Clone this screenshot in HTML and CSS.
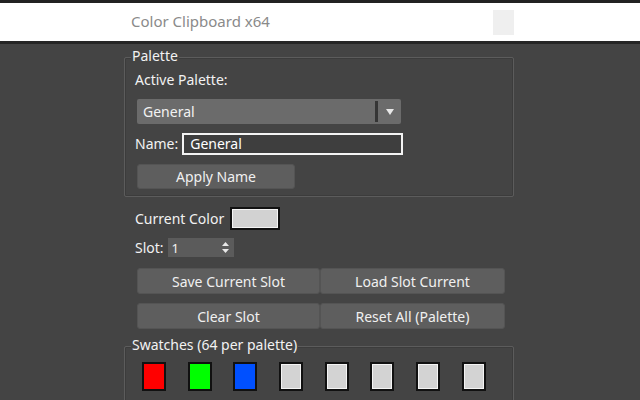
FILE: index.html
```html
<!DOCTYPE html>
<html lang="en">
<head>
  <meta charset="UTF-8">
  <title>Color Clipboard x64</title>
  <link rel="stylesheet" href="styles.css">
</head>
<body>
  <div class="titlebar">
    <div class="title">Color Clipboard x64</div>
    <div class="close"></div>
  </div>

  <div class="panel">
    <div class="group palette-group">
      <div class="group-label">Palette</div>
      <div class="group-body">
        <div class="field-label">Active Palette:</div>
        <div class="dropdown">
          <span class="dropdown-text">General</span>
          <span class="dropdown-sep"></span>
          <span class="dropdown-arrow">
            <svg width="8" height="6" viewBox="0 0 8 6"><path d="M0 0 L8 0 L4 6 Z" fill="#e8e8e8"/></svg>
          </span>
        </div>
        <div class="name-row">
          <span class="label">Name:</span>
          <div class="text-input">General</div>
        </div>
        <div class="btn apply-btn">Apply Name</div>
      </div>
    </div>

    <div class="color-row">
      <span class="label">Current Color</span>
      <div class="color-box"></div>
    </div>

    <div class="slot-row">
      <span class="label">Slot:</span>
      <div class="spinner">
        <span>1</span>
        <svg width="7" height="11" viewBox="0 0 7 11"><path d="M0 4 L3.5 0 L7 4 Z M0 7 L7 7 L3.5 11 Z" fill="#e8e8e8"/></svg>
      </div>
    </div>

    <div class="btn-grid">
      <div class="btn">Save Current Slot</div>
      <div class="btn">Load Slot Current</div>
      <div class="btn">Clear Slot</div>
      <div class="btn">Reset All (Palette)</div>
    </div>

    <div class="group swatch-group">
      <div class="group-label">Swatches (64 per palette)</div>
      <div class="swatches">
        <div class="swatch red"></div>
        <div class="swatch green"></div>
        <div class="swatch blue"></div>
        <div class="swatch empty"></div>
        <div class="swatch empty"></div>
        <div class="swatch empty"></div>
        <div class="swatch empty"></div>
        <div class="swatch empty"></div>
      </div>
    </div>
  </div>
</body>
</html>
```

FILE: styles.css
```css
* {
  margin: 0;
  padding: 0;
  box-sizing: border-box;
}

html, body {
  height: 100%;
  background-color: #444444;
  font-family: "Noto Sans", "Open Sans", sans-serif;
  font-size: 14px;
  color: #f2f2f2;
  overflow: hidden;
}

.titlebar {
  height: 44px;
  background-color: #ffffff;
  border-top: 3px solid #222222;
  border-bottom: 3px solid #262626;
  display: flex;
  align-items: center;
  padding-left: 131px;
}

.title {
  font-size: 15px;
  color: #8a8a8a;
  width: 362px;
  margin-top: -2px;
}

.close {
  width: 21px;
  height: 25px;
  background-color: #efefef;
}

.panel {
  padding-left: 124px;
  width: 514px;
  padding-top: 3px;
}

.group {
  position: relative;
  border: 1px solid #5c5c5c;
  border-radius: 2px;
  box-shadow: inset 0 0 0 1px #3c3c3c;
}

.group-label {
  position: absolute;
  top: -10px;
  left: 6px;
  background-color: #444444;
  padding: 0 1px;
  line-height: 16px;
}

.palette-group {
  margin-top: 10px;
  height: 140px;
}

.group-body {
  padding: 13px 0 0 10px;
}

.field-label {
  line-height: 18px;
}

.label {
  line-height: 18px;
}

.dropdown {
  margin-top: 10px;
  margin-left: 2px;
  width: 264px;
  height: 25px;
  background-color: #6b6b6b;
  border-radius: 2px;
  display: flex;
  align-items: center;
}

.dropdown-text {
  flex: 1;
  padding-left: 6px;
}

.dropdown-sep {
  width: 3px;
  height: 21px;
  background-color: #353535;
}

.dropdown-arrow {
  width: 23px;
  display: flex;
  justify-content: center;
  align-items: center;
}

.name-row {
  margin-top: 9px;
  display: flex;
  align-items: center;
}

.text-input {
  margin-left: 4px;
  width: 221px;
  height: 22px;
  border: 2px solid #f4f4f4;
  background-color: #3e3e3e;
  padding-left: 6px;
  line-height: 18px;
  color: #ffffff;
}

.btn {
  height: 26px;
  background-color: #5e5e5e;
  border: 1px solid #545454;
  border-radius: 3px;
  display: flex;
  align-items: center;
  justify-content: center;
  color: #f0f0f0;
}

.apply-btn {
  margin-top: 9px;
  margin-left: 2px;
  width: 158px;
  height: 25px;
}

.color-row {
  margin-top: 10px;
  padding-left: 11px;
  display: flex;
  align-items: center;
}

.color-box {
  margin-left: 6px;
  width: 50px;
  height: 23px;
  background-color: #d2d2d2;
  border: 2px solid #111111;
  box-shadow: inset 0 0 0 1px #f4f4f4;
}

.slot-row {
  margin-top: 8px;
  padding-left: 11px;
  display: flex;
  align-items: center;
}

.spinner {
  margin-left: 4px;
  width: 66px;
  height: 19px;
  background-color: #5b5b5b;
  display: flex;
  align-items: center;
  justify-content: space-between;
  padding: 0 5px 0 4px;
  font-size: 13px;
}

.btn-grid {
  margin-top: 11px;
  margin-left: 13px;
  width: 368px;
  display: grid;
  grid-template-columns: 183px 185px;
  row-gap: 9px;
}

.swatch-group {
  margin-top: 17px;
  height: 60px;
}

.swatches {
  display: flex;
  gap: 21.7px;
  padding: 15px 0 0 17px;
}

.swatch {
  width: 24px;
  height: 29px;
  border: 2px solid #111111;
}

.red { background-color: #ff0000; }
.green { background-color: #00ff00; }
.blue { background-color: #0050ff; }

.empty {
  background-color: #d3d3d3;
  box-shadow: inset 0 0 0 1px #f4f4f4;
}
```
